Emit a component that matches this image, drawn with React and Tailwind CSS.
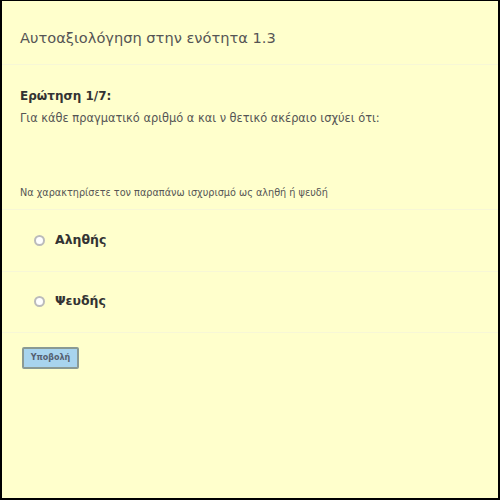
export default function App() {
  const font = { fontFamily: '"DejaVu Sans", Verdana, sans-serif' };
  return (
    <div className="w-[500px] h-[500px] bg-black p-[2px] pt-[1px]">
      <div className="w-full h-full bg-[#ffffcc] flex flex-col" style={font}>
        <div className="h-[64px] flex items-center pl-[18px] pt-[11px] border-b border-[#f7f7d6]">
          <h1 className="text-[14.6px] text-[#555555]">Αυτοαξιολόγηση στην ενότητα 1.3</h1>
        </div>
        <div className="pl-[18px] pt-[22px]">
          <div className="text-[12px] font-bold text-[#333333]">Ερώτηση 1/7:</div>
          <div className="text-[11.4px] text-[#555555] mt-[5px]">Για κάθε πραγματικό αριθμό α και ν θετικό ακέραιο ισχύει ότι:</div>
        </div>
        <div className="pl-[18px] mt-[59px] pb-[8px] border-b border-[#f7f7d6]">
          <div className="text-[9.7px] text-[#555555]">Να χαρακτηρίσετε τον παραπάνω ισχυρισμό ως αληθή ή ψευδή</div>
        </div>
        <div className="h-[62px] flex items-center pl-[32px] border-b border-[#f7f7d6]">
          <span className="w-[11px] h-[11px] rounded-full border-[2px] border-[#bbbbbb] bg-white mr-[10px]" />
          <span className="text-[12.5px] font-bold text-[#333333]">Αληθής</span>
        </div>
        <div className="h-[61px] flex items-center pl-[32px] border-b border-[#f7f7d6]">
          <span className="w-[11px] h-[11px] rounded-full border-[2px] border-[#bbbbbb] bg-white mr-[10px]" />
          <span className="text-[12.5px] font-bold text-[#333333]">Ψευδής</span>
        </div>
        <div className="pl-[20px] pt-[10px]">
          <button className="w-[57px] h-[22px] bg-[#a8d4ee] border-[2px] border-[#8a9a94] rounded-[2px] text-[8px] font-bold text-[#556070]">Υποβολή</button>
        </div>
      </div>
    </div>
  );
}
